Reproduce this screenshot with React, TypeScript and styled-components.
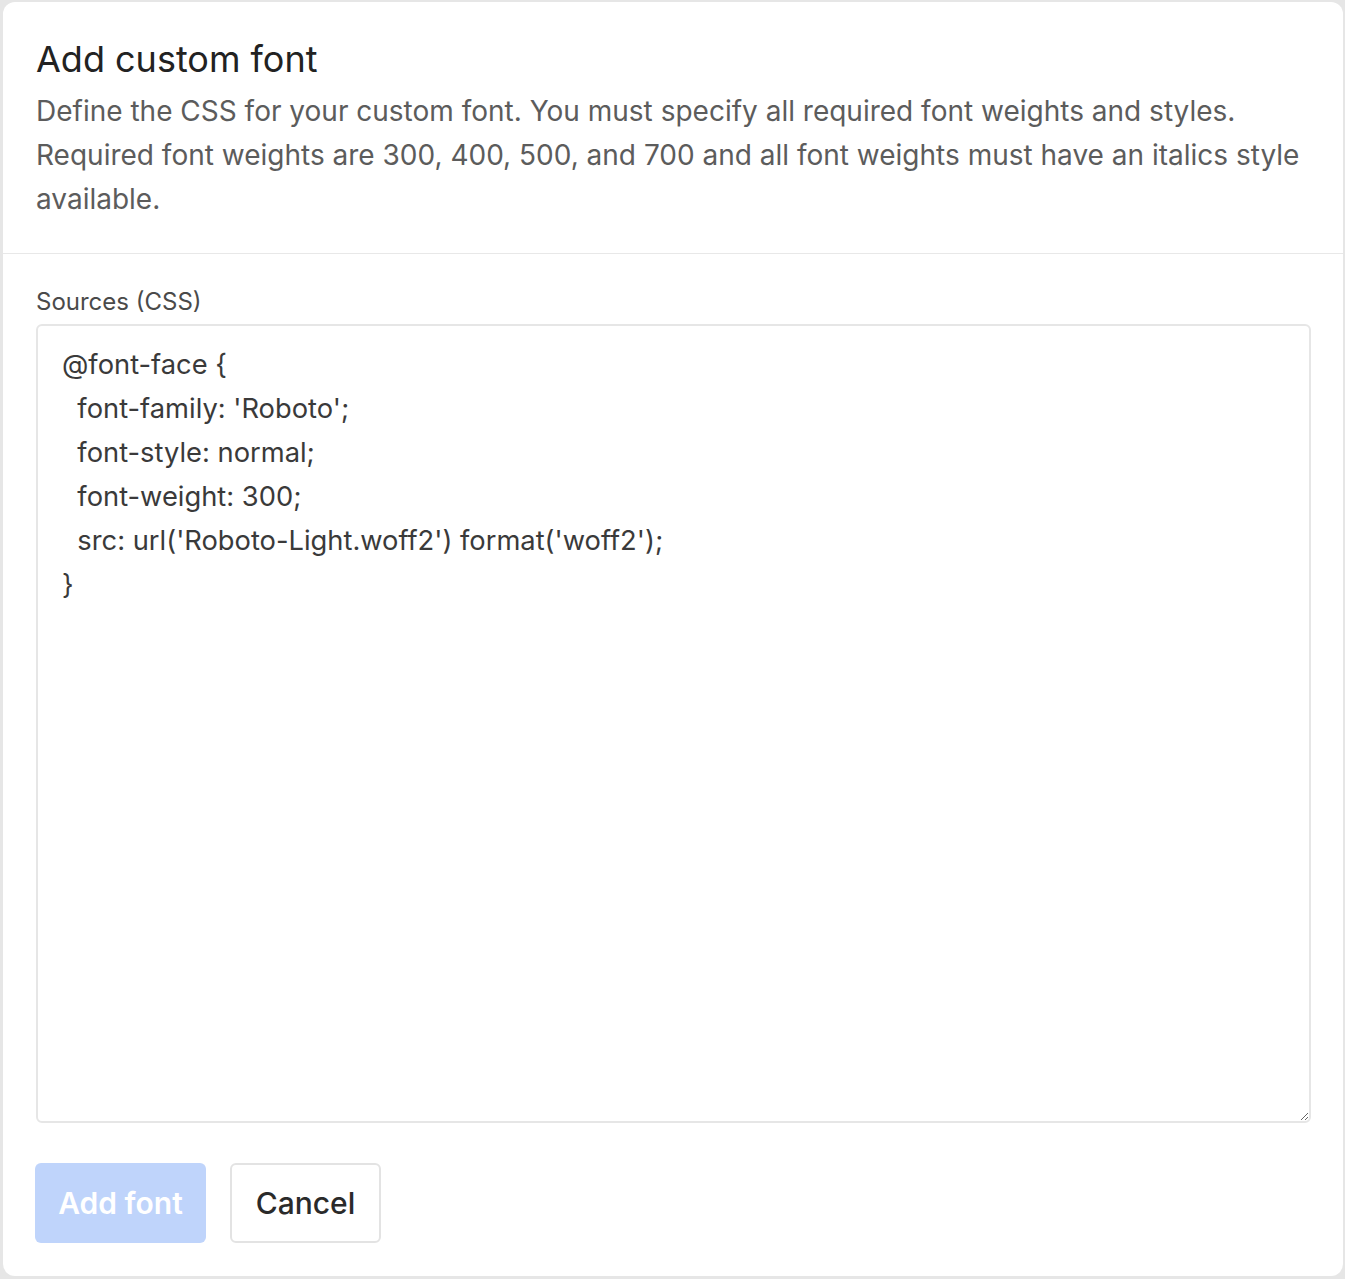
import React from "react";
import styled, { createGlobalStyle } from "styled-components";

const Global = createGlobalStyle`
  html, body { margin: 0; padding: 0; background: #e6e6e6; }
  body { font-family: Inter, "Noto Sans", sans-serif; }
  * { box-sizing: border-box; }
`;

const Page = styled.div`
  padding: 2px 2px 3px 3px;
  height: 1279px;
`;

const Dialog = styled.div`
  background: #fff;
  border-radius: 12px;
  height: 100%;
  display: flex;
  flex-direction: column;
`;

const Header = styled.div`
  padding: 35px 33px 32px;
  border-bottom: 1px solid #e8e8e8;
`;

const Title = styled.h2`
  margin: 0 0 8px;
  font-size: 36px;
  font-weight: 400;
  color: #222;
  line-height: 44px;
`;

const Desc = styled.p`
  margin: 0;
  font-size: 28px;
  line-height: 44px;
  color: #5c5c5c;
`;

const Body = styled.div`
  padding: 32px 33px 0;
  display: flex;
  flex-direction: column;
`;

const Label = styled.label`
  font-size: 24px;
  color: #4a4a4a;
  line-height: 32px;
  margin-bottom: 6px;
`;

const Area = styled.textarea`
  width: 1275px;
  height: 799px;
  border: 2px solid #e6e6e6;
  border-radius: 6px;
  padding: 17px 24px;
  font-family: Inter, "Noto Sans", sans-serif;
  font-size: 27.3px;
  line-height: 44px;
  color: #3a3a3a;
  resize: vertical;
  outline: none;
  caret-color: #2b5ce6;
`;

const Actions = styled.div`
  display: flex;
  gap: 24px;
  padding: 40px 32px 0;
`;

const Button = styled.button<{ $primary?: boolean }>`
  height: 80px;
  padding: 0 20px;
  border-radius: 6px;
  white-space: nowrap;
  font-family: Inter, "Noto Sans", sans-serif;
  font-size: 30px;
  font-weight: ${p => (p.$primary ? 600 : 500)};
  color: ${p => (p.$primary ? "#fff" : "#2a2a2a")};
  background: ${p => (p.$primary ? "#bfd4fb" : "#fff")};
  border: ${p => (p.$primary ? "none" : "2px solid #e3e3e3")};
`;

const css = `@font-face {
  font-family: 'Roboto';
  font-style: normal;
  font-weight: 300;
  src: url('Roboto-Light.woff2') format('woff2');
}`;

export default function App() {
  return (
    <Page>
      <Global />
      <Dialog>
        <Header>
          <Title>Add custom font</Title>
          <Desc>
            Define the CSS for your custom font. You must specify all required font weights and styles.
            Required font weights are 300, 400, 500, and 700 and all font weights must have an italics style
            available.
          </Desc>
        </Header>
        <Body>
          <Label>Sources (CSS)</Label>
          <Area defaultValue={css} autoFocus spellCheck={false} />
        </Body>
        <Actions>
          <Button $primary style={{ width: 171 }}>Add font</Button>
          <Button style={{ width: 151 }}>Cancel</Button>
        </Actions>
      </Dialog>
    </Page>
  );
}
